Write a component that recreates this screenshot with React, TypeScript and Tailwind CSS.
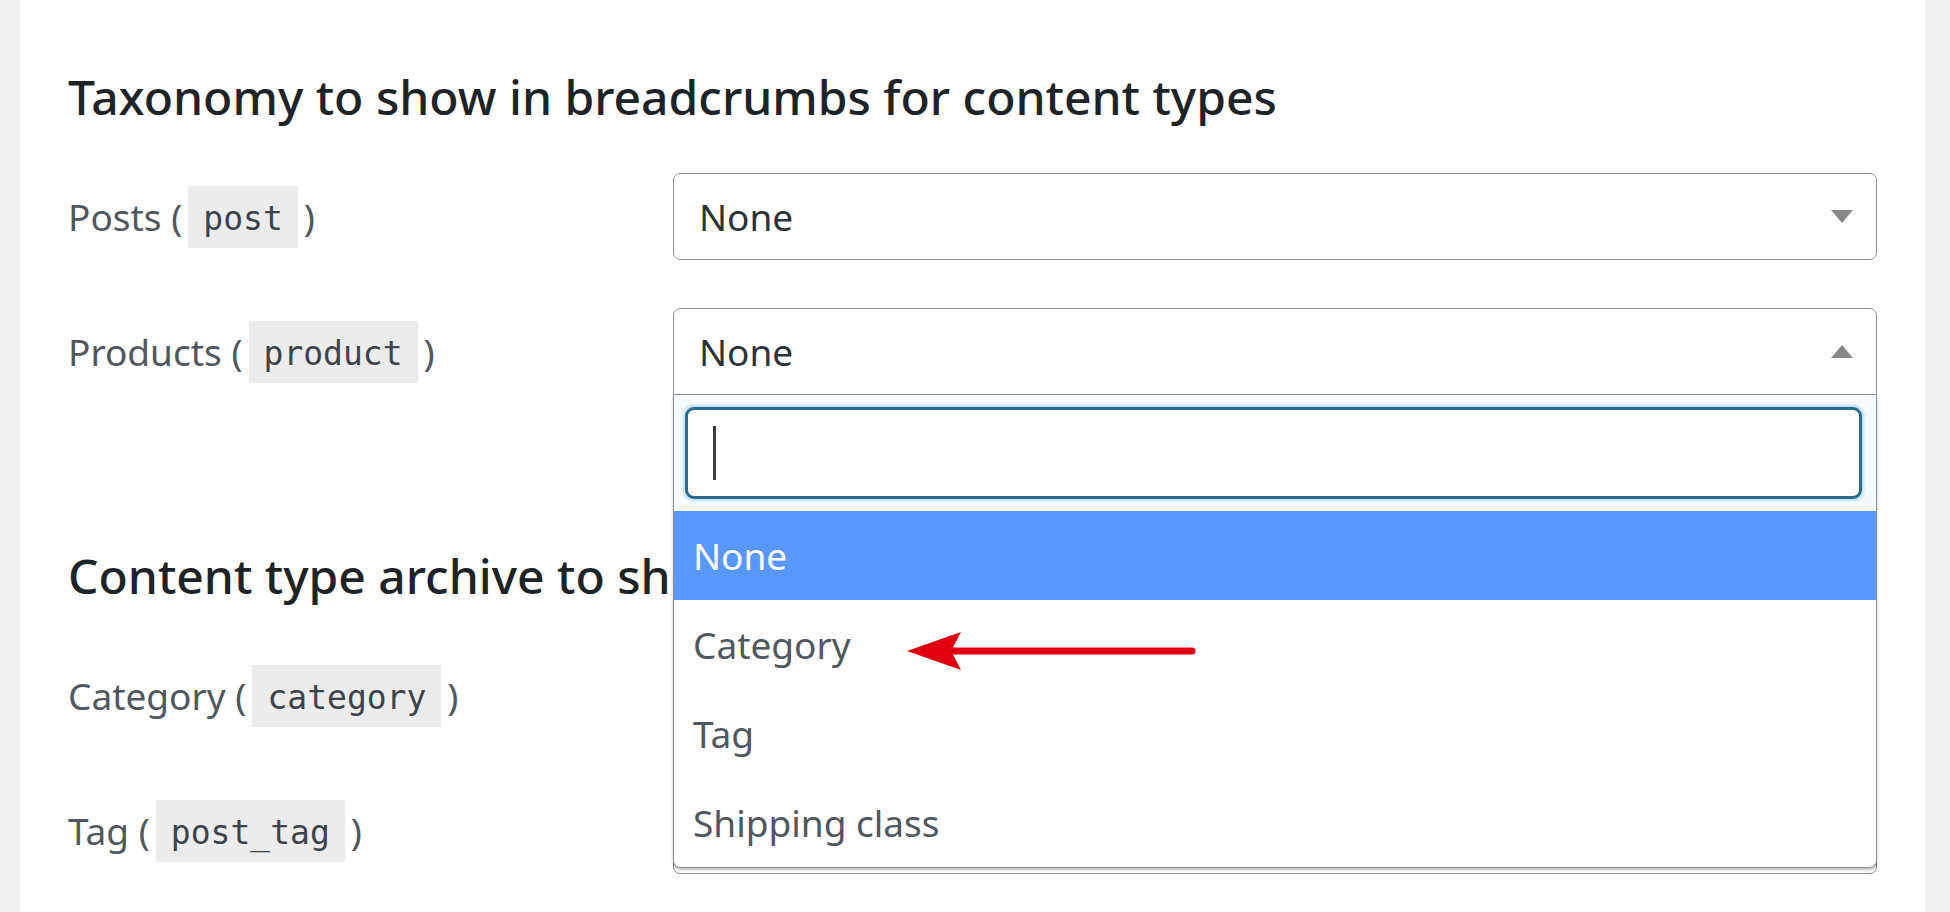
import React from "react";

const FONT = { fontFamily: '"Noto Sans", "Open Sans", sans-serif' };

function Code({ children }: { children: React.ReactNode }) {
  return (
    <code
      className="mx-[6px] inline-flex h-[62px] items-center bg-[#ececec] px-[15px] pt-[4px] text-[33px] text-[#3c434a]"
      style={{ fontFamily: '"DejaVu Sans Mono", "Liberation Mono", monospace' }}
    >
      {children}
    </code>
  );
}

function Label({ name, code }: { name: string; code: string }) {
  return (
    <div className="flex items-center text-[37px] text-[#50575e]">
      <span>{name} (</span>
      <Code>{code}</Code>
      <span>)</span>
    </div>
  );
}

function Arrow({ up }: { up?: boolean }) {
  return (
    <svg width="22" height="13" viewBox="0 0 22 13" className="shrink-0">
      {up ? (
        <polygon points="0,13 22,13 11,0" fill="#888888" />
      ) : (
        <polygon points="0,0 22,0 11,13" fill="#888888" />
      )}
    </svg>
  );
}

function Select({ open, hidden }: { open?: boolean; hidden?: boolean }) {
  return (
    <div
      className={
        "flex h-[87px] w-[1204px] items-center justify-between border border-[#8c8f94] bg-white pl-[25px] pr-[23px] text-[37px] text-[#2c3338] " +
        (open ? "rounded-t-[7px]" : "rounded-[7px]")
      }
    >
      {hidden ? null : (
        <>
          <span>None</span>
          <Arrow up={open} />
        </>
      )}
    </div>
  );
}

function Row({ name, code, open, hidden }: { name: string; code: string; open?: boolean; hidden?: boolean }) {
  return (
    <div className="grid grid-cols-[605px_1204px] items-center">
      <Label name={name} code={code} />
      <Select open={open} hidden={hidden} />
    </div>
  );
}

export default function App() {
  return (
    <div className="flex h-[912px] w-[1950px] overflow-hidden bg-white" style={FONT}>
      <div className="w-[20px] shrink-0 bg-[#f0f0f1]" />
      <div className="relative flex-1 pl-[48px] pt-[66px]">
        <h2 className="h-[62px] text-[48px] font-medium leading-[62px] text-[#1d2327]">
          Taxonomy to show in breadcrumbs for content types
        </h2>
        <div className="mt-[45px] flex flex-col gap-[48px]">
          <Row name="Posts" code="post" />
          <Row name="Products" code="product" open />
        </div>
        <div className="mt-[150px] h-[62px] w-[605px] overflow-hidden">
          <h2 className="whitespace-nowrap text-[48px] font-medium leading-[62px] text-[#1d2327]">
            Content type archive to show in breadcrumbs for taxonomies
          </h2>
        </div>
        <div className="mt-[45px] flex flex-col gap-[48px]">
          <Row name="Category" code="category" hidden />
          <Row name="Tag" code="post_tag" hidden />
        </div>

        {/* open dropdown */}
        <div className="absolute left-[653px] top-[395px] z-10 w-[1204px] rounded-b-[7px] border-x border-b border-[#8c8f94] bg-white shadow-[0_2px_3px_rgba(0,0,0,0.25)]">
          <div className="bg-[#f5fbfd] pb-[12px] pl-[11px] pr-[14px] pt-[12px]">
            <div className="flex h-[92px] items-center rounded-[9px] border-[3px] border-[#2d6b8a] bg-white pl-[25px] shadow-[0_0_3px_2px_rgba(120,190,225,0.45)]">
              <span className="h-[54px] w-[3px] bg-[#3a3a3a]" />
            </div>
          </div>
          <div className="flex h-[89px] items-center bg-[#5897fb] pl-[19px] text-[37px] text-white">None</div>
          <div className="flex h-[89px] items-center pl-[19px] text-[37px] text-[#50575e]">Category</div>
          <div className="flex h-[89px] items-center pl-[19px] text-[37px] text-[#50575e]">Tag</div>
          <div className="flex h-[89px] items-center pl-[19px] text-[37px] text-[#50575e]">Shipping class</div>
        </div>

        {/* red annotation arrow */}
        <svg
          className="absolute left-[887px] top-[630px] z-20"
          width="290"
          height="42"
          viewBox="0 0 290 42"
        >
          <line x1="40" y1="21" x2="285" y2="21" stroke="#e00010" strokeWidth="7" strokeLinecap="round" />
          <polygon points="0,21 54,2 44,21 54,40" fill="#e00010" />
        </svg>
      </div>
      <div className="w-[25px] shrink-0 bg-[#f0f0f1]" />
    </div>
  );
}
